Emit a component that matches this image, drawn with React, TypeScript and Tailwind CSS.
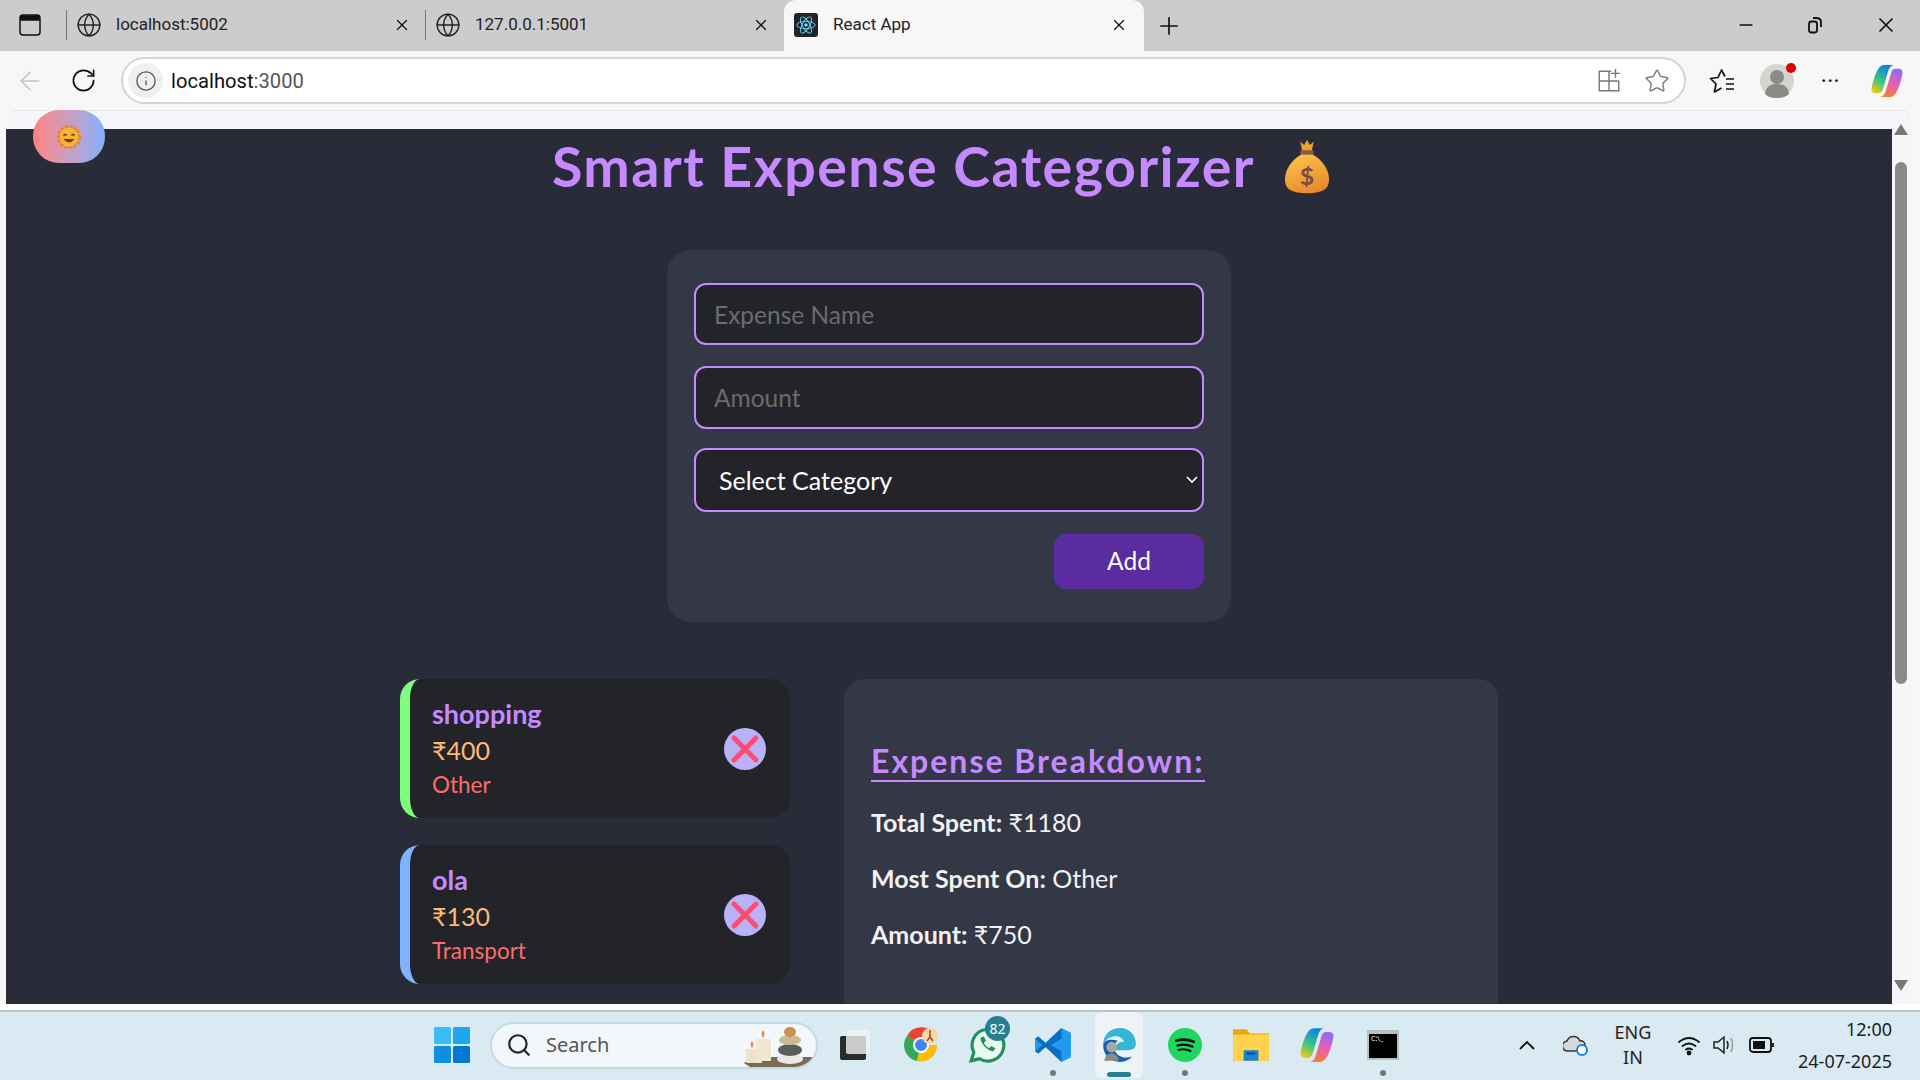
import { ArrowLeft, Globe, Info, Minus, Plus, RotateCw, Search, Star, X } from 'lucide-react';

const expenses = [
  { name: 'shopping', amount: '₹400', category: 'Other', border: 'border-[#7dff7d]' },
  { name: 'ola', amount: '₹130', category: 'Transport', border: 'border-[#7fb2ff]' },
];

const stats = [
  { label: 'Total Spent:', value: '₹1180' },
  { label: 'Most Spent On:', value: 'Other' },
  { label: 'Amount:', value: '₹750' },
];

function BackgroundTab({ title }: { title: string }) {
  return (
    <div className="flex h-[51px] w-[359px] shrink-0 items-center pb-[2px]">
      <div className="h-[30px] w-px bg-[#777]" />
      <Globe className="ml-[9px] size-[26px] text-[#222]" strokeWidth={1.3} />
      <span className="ml-[14px] text-[17px] text-[#222]">{title}</span>
      <X className="ml-auto mr-[14px] size-[18px] text-[#111]" strokeWidth={1.7} />
    </div>
  );
}

function ReactLogo() {
  return (
    <div className="flex size-[24px] items-center justify-center rounded-[3px] bg-[#20232a]">
      <svg viewBox="0 0 24 24" className="size-[22px]" fill="none" stroke="#61dafb" strokeWidth="1">
        <ellipse cx="12" cy="12" rx="10" ry="4" />
        <ellipse cx="12" cy="12" rx="10" ry="4" transform="rotate(60 12 12)" />
        <ellipse cx="12" cy="12" rx="10" ry="4" transform="rotate(120 12 12)" />
        <circle cx="12" cy="12" r="2" fill="#61dafb" stroke="none" />
      </svg>
    </div>
  );
}

function CopilotLogo({ size, id }: { size: string; id: string }) {
  return (
    <svg viewBox="0 0 32 32" className={size}>
      <defs>
        <linearGradient id={`${id}A`} x1="0.2" y1="1" x2="0.6" y2="0">
          <stop offset="0" stopColor="#f7c815" />
          <stop offset="0.45" stopColor="#38c77f" />
          <stop offset="1" stopColor="#0f7fe8" />
        </linearGradient>
        <linearGradient id={`${id}B`} x1="0.6" y1="0" x2="0.4" y2="1">
          <stop offset="0" stopColor="#8f6cf5" />
          <stop offset="0.55" stopColor="#ea5fb0" />
          <stop offset="1" stopColor="#f77f35" />
        </linearGradient>
      </defs>
      <path d="M13 1h9c-3 1-4 3-5 6l-5 17c-.6 2-2 3.500-4 3.500H5c-3 0-4-2.500-3.500-5C3 15 5 9 7 6c1.500-3 3.500-5 6-5z" fill={`url(#${id}A)`} />
      <path d="M19 31h-9c3-1 4-3 5-6l5-17c.6-2 2-3.500 4-3.500h3c3 0 4 2.500 3.500 5C29 17 27 23 25 26c-1.500 3-3.500 5-6 5z" fill={`url(#${id}B)`} />
    </svg>
  );
}

function SunEmoji() {
  return (
    <svg viewBox="0 0 24 28" className="h-[28px] w-[24px]">
      <circle cx="12" cy="14" r="10.500" fill="none" stroke="#e8861c" strokeWidth="3" strokeDasharray="3 1.500" />
      <circle cx="12" cy="14" r="9.500" fill="#f9b233" />
      <path d="M6.500 12.500q1.500-2 3 0M14.500 12.500q1.500-2 3 0" fill="none" stroke="#6b3a12" strokeWidth="1.300" />
      <path d="M7 16q5 6 10 0" fill="#7a3c12" stroke="#6b3a12" strokeWidth="1" />
    </svg>
  );
}

function MoneyBag() {
  return (
    <svg viewBox="0 0 48 64" preserveAspectRatio="none" className="h-[55px] w-[46px]">
      <defs>
        <linearGradient id="bag" x1="0.2" y1="0" x2="0.6" y2="1">
          <stop offset="0" stopColor="#fcc34a" />
          <stop offset="1" stopColor="#e88a2b" />
        </linearGradient>
      </defs>
      <path d="M17 3l4 4 3-6 3 6 4-4-2 11H19z" fill="#eca02e" />
      <rect x="17" y="13" width="14" height="5" rx="1" fill="#8a5a3c" />
      <path d="M18 18h12c10 6 17 18 17 29 0 12-8 16-23 16S1 59 1 47c0-11 7-23 17-29z" fill="url(#bag)" />
      <text x="24" y="53" textAnchor="middle" fontSize="26" fontWeight="700" fill="#7c4b46" fontFamily="Lato, sans-serif">$</text>
    </svg>
  );
}

function DeleteIcon() {
  return (
    <div className="flex size-[42px] items-center justify-center rounded-full bg-[#b9b2f8]">
      <svg viewBox="0 0 32 32" className="size-[32px]" stroke="#ff4d70" strokeWidth="5" strokeLinecap="round">
        <path d="M5 5l22 22M27 5L5 27" />
      </svg>
    </div>
  );
}

function Expense({ name, amount, category, border }: (typeof expenses)[number]) {
  return (
    <div className={`flex h-[139px] items-center justify-between rounded-[20px] border-l-[10px] bg-[#23242a] pl-[22px] pr-[24px] ${border}`}>
      <div className="pb-[1px]">
        <p className="text-[27px] font-bold leading-[36px] text-[#c58aff]">{name}</p>
        <p className="text-[25px] leading-[36px] text-[#fdba74]">{amount}</p>
        <p className="text-[22.5px] leading-[33px] text-[#ff6b6b]">{category}</p>
      </div>
      <DeleteIcon />
    </div>
  );
}

function TaskSlot({ children, dot }: { children: React.ReactNode; dot?: boolean }) {
  return (
    <div className="relative flex h-[66px] w-[66px] shrink-0 items-center justify-center">
      {children}
      {dot && <div className="absolute bottom-[2px] size-[6px] rounded-full bg-[#777]" />}
    </div>
  );
}

function BrowserChrome() {
  return (
    <>
      <div className="flex h-[51px] shrink-0 items-center bg-[#cccccc]">
        <div className="flex w-[66px] justify-center pb-[2px] pr-[6px]">
          <svg viewBox="0 0 22 24" className="h-[24px] w-[22px]" fill="none" stroke="#111" strokeWidth="1.500">
            <rect x="1" y="2" width="20" height="20" rx="3" />
            <path d="M2 3h18v4H2z" fill="#111" />
          </svg>
        </div>
        <BackgroundTab title="localhost:5002" />
        <BackgroundTab title="127.0.0.1:5001" />
        <div className="flex h-[51px] w-[360px] shrink-0 items-center rounded-t-[12px] bg-[#f7f7f7] pb-[2px] pl-[10px]">
          <ReactLogo />
          <span className="ml-[15px] text-[17px] text-[#222]">React App</span>
          <X className="ml-auto mr-[16px] size-[18px] text-[#111]" strokeWidth={1.7} />
        </div>
        <Plus className="ml-[11px] size-[28px] text-[#111]" strokeWidth={1.4} />
        <div className="ml-auto flex items-center gap-[49px] pb-[2px] pr-[22px]">
          <Minus className="ml-[1px] size-[20px] text-[#111]" strokeWidth={2} />
          <svg viewBox="0 0 20 20" className="size-[20px]" fill="none" stroke="#111" strokeWidth="1.800">
            <rect x="4" y="6.500" width="8" height="11" rx="2.500" />
            <path d="M8 3h3c3 0 5 1.500 5 4v5" />
          </svg>
          <X className="size-[24px] text-[#111]" strokeWidth={1.7} />
        </div>
      </div>
      <div className="flex h-[59px] shrink-0 items-center bg-[#f7f7f7]">
        <div className="flex w-[121px] items-center">
          <ArrowLeft className="ml-[15px] size-[30px] text-[#c4c4c4]" strokeWidth={1.300} />
          <RotateCw className="ml-[25px] size-[27px] text-[#111]" strokeWidth={1.500} />
        </div>
        <div className="flex h-[47px] w-[1565px] items-center rounded-full border-2 border-[#d4d4d4] bg-white pl-[5px] pr-[14px]">
          <div className="flex size-[35px] items-center justify-center rounded-full bg-[#f0f0f0]">
            <Info className="size-[22px] text-[#555]" strokeWidth={1.400} />
          </div>
          <span className="ml-[8px] pt-[2px] text-[20.2px] text-[#111]">
            localhost<span className="text-[#555]">:3000</span>
          </span>
          <svg viewBox="0 0 24 24" className="ml-auto size-[26px]" fill="none" stroke="#777" strokeWidth="1.300">
            <path d="M14 3H3v18h18v-9M3 12h18M12 3v18M18 1v8M14 5h8" />
          </svg>
          <Star className="ml-[22px] size-[26px] text-[#777]" strokeWidth={1.300} />
        </div>
        <div className="flex flex-1 items-center pl-[22px]">
          <svg viewBox="0 0 28 28" className="size-[28px]" fill="none" stroke="#111" strokeWidth="1.700" strokeLinejoin="round">
            <path d="M17 9.500L13.500 3 10 10.500l-7.500 1 5.500 5.500L6.500 25l7-4" />
            <path d="M18 12h8M18 17h8M18 22h8" />
          </svg>
          <div className="relative ml-[24px] flex size-[34px] items-end justify-center rounded-full bg-[#d4d4d0]">
            <svg viewBox="0 0 34 34" className="size-[34px]">
              <circle cx="17" cy="13" r="7" fill="#8a8a86" />
              <path d="M5 30c1-9 7-10 12-10s11 1 12 10c-3 3-7 4-12 4s-9-1-12-4z" fill="#8a8a86" />
            </svg>
            <div className="absolute right-[-2px] top-[-1px] size-[10px] rounded-full bg-[#e00000]" />
          </div>
          <span className="ml-[27px] text-[18px] font-bold leading-none tracking-[1px] text-[#222]">···</span>
          <div className="ml-[30px]">
            <CopilotLogo size="size-[34px]" id="copTop" />
          </div>
        </div>
      </div>
    </>
  );
}

function Taskbar() {
  return (
    <div className="flex h-[70px] shrink-0 items-center border-t-2 border-[#b9c4c8] bg-[#d9eaf2] pb-[2px] pl-[434px] pr-[28px] font-['Noto_Sans',sans-serif]">
      <svg viewBox="0 0 36 36" className="size-[36px]">
        <rect width="17" height="17" x="0" y="0" rx="1.500" fill="#38bdf8" />
        <rect width="17" height="17" x="19" y="0" rx="1.500" fill="#1ea6ee" />
        <rect width="17" height="17" x="0" y="19" rx="1.500" fill="#0f8fe0" />
        <rect width="17" height="17" x="19" y="19" rx="1.500" fill="#0078d4" />
      </svg>
      <div className="relative ml-[20px] flex h-[47px] w-[328px] shrink-0 items-center overflow-hidden rounded-full border-2 border-[#c8d8df] bg-[#f1f7fa] pl-[14px]">
        <Search className="size-[26px] text-[#222]" strokeWidth={2} />
        <span className="ml-[14px] text-[20px] text-[#555]">Search</span>
        <svg viewBox="0 0 70 40" className="absolute bottom-0 right-[2px] h-[40px] w-[70px]">
          <path d="M0 36l8-6h62l-8 10H6z" fill="#7a6a55" />
          <rect x="2" y="22" width="16" height="14" rx="1" fill="#ede2cc" />
          <rect x="12" y="12" width="15" height="22" rx="1" fill="#f0e6d2" />
          <path d="M8 14q3 4 0 7-3-3 0-7zM19 3q3 4 0 8-3-4 0-8z" fill="#f08a3c" />
          <ellipse cx="46" cy="32" rx="13" ry="5" fill="#e8e8e4" />
          <ellipse cx="46" cy="23" rx="12" ry="6" fill="#5c5c5a" />
          <ellipse cx="46" cy="13" rx="11" ry="5" fill="#cbb990" />
          <ellipse cx="46" cy="5" rx="6" ry="5" fill="#c8924e" />
        </svg>
      </div>
      <div className="ml-[4px] flex items-center">
        <TaskSlot>
          <div className="relative size-[30px]">
            <div className="absolute bottom-0 left-0 h-[24px] w-[26px] rounded-[2px] bg-[#2a2a2a]" />
            <div className="absolute right-0 top-0 h-[24px] w-[24px] rounded-[2px] bg-[#f0f3f4]/80" />
          </div>
        </TaskSlot>
        <TaskSlot>
          <svg viewBox="0 0 36 36" className="size-[36px]">
            <path d="M18 18L4 9a16 16 0 0128-1z" fill="#ea4335" />
            <path d="M18 18L4 9a16 16 0 0010 25z" fill="#34a853" />
            <path d="M18 18h16a16 16 0 01-20 16z" fill="#fbbc05" />
            <circle cx="18" cy="18" r="8" fill="#fff" />
            <circle cx="18" cy="18" r="6" fill="#4285f4" />
            <circle cx="27" cy="9" r="8" fill="#f3d8a8" />
            <path d="M27 3v7l-3 4M27 10l3 4" stroke="#b4421f" strokeWidth="1.600" fill="none" />
          </svg>
        </TaskSlot>
        <TaskSlot>
          <div className="relative">
            <svg viewBox="0 0 36 36" className="size-[38px]" fill="none" stroke="#1f8f5f" strokeWidth="3">
              <path d="M3 33l2.500-8A15 15 0 1111 31z" fill="#eaf6f0" />
              <path d="M12 11c-1 4 6 13 12 13l2-3-4-2-2 2c-2-1-4-3-5-5l2-2-2-4z" fill="#1f8f5f" stroke="none" />
            </svg>
            <span className="absolute left-[17px] top-[-10px] flex size-[25px] items-center justify-center rounded-full bg-[#277f92] text-[14px] text-white">82</span>
          </div>
        </TaskSlot>
        <TaskSlot dot>
          <svg viewBox="0 0 36 36" className="size-[38px]">
            <path d="M26 2l9 4.500v23L26 34 11 20 4 26l-3-2V12l3-2 7 6z" fill="#1f9cf0" />
            <path d="M26 2v10l-10 6 10 6v10L11 20 4 26l-3-2 7-6-7-6 3-2 7 6z" fill="#0a6fc2" />
          </svg>
        </TaskSlot>
        <TaskSlot>
          <div className="absolute inset-x-[9px] inset-y-0 rounded-[6px] bg-[#edf4f8]" />
          <svg viewBox="0 0 36 36" className="relative size-[38px]">
            <path d="M3 18C3 8 10 2 19 2c9 0 15 7 15 15 0 5-5 6-9 6H14c0-6 5-9 9-8-2-4-6-6-10-5C8 11 4 14 3 18z" fill="#35b6d6" />
            <path d="M3 18c0 10 7 16 16 16 5 0 9-2 11-5-5 2-14 1-16-6-1-4 0-7 3-9C10 12 4 13 3 18z" fill="#1560b0" />
            <circle cx="11" cy="20" r="5" fill="#a8a8a4" />
            <path d="M4 33c1-5 4-7 7-7s6 2 7 7z" fill="#8a8a86" />
          </svg>
          <div className="absolute bottom-[1px] h-[5px] w-[24px] rounded-full bg-[#277f92]" />
        </TaskSlot>
        <TaskSlot dot>
          <div className="flex size-[34px] items-center justify-center rounded-full bg-[#1ed760]">
            <svg viewBox="0 0 24 24" className="size-[26px]" fill="none" stroke="#111" strokeLinecap="round">
              <path d="M4 8q8-2.500 16 1" strokeWidth="2.600" />
              <path d="M5 12.500q7-2 14 1" strokeWidth="2.200" />
              <path d="M6 16.500q6-1.500 11 1" strokeWidth="1.900" />
            </svg>
          </div>
        </TaskSlot>
        <TaskSlot>
          <svg viewBox="0 0 36 36" className="size-[38px]">
            <path d="M1 3h13l3 4h18v26H1z" fill="#e8a80c" />
            <path d="M1 8h34v25H1z" fill="#ffd34d" />
            <rect x="11" y="23" width="14" height="10" rx="1" fill="#1a83d4" />
            <rect x="14" y="25" width="8" height="2" fill="#0b4f8a" />
          </svg>
        </TaskSlot>
        <TaskSlot>
          <CopilotLogo size="size-[36px]" id="copBar" />
        </TaskSlot>
        <TaskSlot dot>
          <div className="h-[30px] w-[32px] border-2 border-t-[4px] border-[#b8c0c4] bg-black pl-[2px] text-[7px] leading-[9px] text-white">C:\_</div>
        </TaskSlot>
      </div>
      <div className="ml-auto flex items-center text-[#222]">
        <svg viewBox="0 0 20 20" className="size-[20px]" fill="none" stroke="#111" strokeWidth="1.800">
          <path d="M3 14l7-7 7 7" />
        </svg>
        <svg viewBox="0 0 26 24" className="ml-[26px] h-[24px] w-[26px]">
          <path d="M5 18a5 5 0 01-1-10 7 7 0 0113 0 4 4 0 015 4v6z" fill="#d5d8da" stroke="#333" strokeWidth="1.500" />
          <circle cx="19" cy="17" r="5" fill="#fff" stroke="#1a83d4" strokeWidth="2" />
        </svg>
        <div className="ml-[24px] w-[40px] text-center text-[18px] leading-[25px]">
          <p>ENG</p>
          <p>IN</p>
        </div>
        <svg viewBox="0 0 24 24" className="ml-[24px] size-[24px]" fill="none" stroke="#111" strokeWidth="1.800" strokeLinecap="round">
          <path d="M2 9q10-8 20 0M5.500 13q6.500-5 13 0M9 16.500q3-2 6 0" />
          <circle cx="12" cy="20" r="1.500" fill="#111" />
        </svg>
        <svg viewBox="0 0 26 26" className="ml-[10px] size-[26px]" fill="none" stroke="#222" strokeWidth="1.500">
          <path d="M3 10h4l6-5v16l-6-5H3z" />
          <path d="M16 9q2 4 0 8" />
          <path d="M20 6q3 7 0 14" stroke="#999" />
        </svg>
        <svg viewBox="0 0 26 20" className="ml-[12px] h-[20px] w-[26px]" fill="none" stroke="#111" strokeWidth="1.800">
          <rect x="1" y="3" width="21" height="14" rx="3" />
          <rect x="4" y="6" width="12" height="8" fill="#111" stroke="none" />
          <path d="M24 8v4" />
        </svg>
        <div className="ml-[14px] w-[103px] text-right text-[18px] leading-[32px]">
          <p>12:00</p>
          <p>24-07-2025</p>
        </div>
      </div>
    </div>
  );
}

export default function App() {
  return (
    <div className="flex h-screen flex-col overflow-hidden bg-[#f7f7f7] font-['Roboto',sans-serif]">
      <BrowserChrome />

      {/* Page viewport */}
      <div className="flex min-h-0 flex-1 px-[6px] pr-[10px]">
        <div className="relative flex min-w-0 flex-1 flex-col overflow-hidden rounded-tl-[8px] font-['Lato',sans-serif]">
          <div className="h-[19px] shrink-0 border-t border-[#e6e6e6] bg-[#f5f5fa]" />
          <button className="absolute left-[27px] top-0 flex h-[53px] w-[72px] items-center justify-center rounded-[26px] bg-gradient-to-r from-[#ff8080] to-[#80b0ff]">
            <SunEmoji />
          </button>
          <div className="flex-1 overflow-hidden bg-[#2a2b38]">
            <div className="flex items-center justify-center gap-[29px] pr-[16px] pt-[6px]">
              <h1 className="text-[55.5px] font-bold leading-[62px] tracking-[1.5px] text-[#c58aff]">Smart Expense Categorizer</h1>
              <MoneyBag />
            </div>

            <form className="mx-auto mt-[53px] flex w-[564px] flex-col rounded-[24px] bg-[#343746] px-[27px] pb-[33px] pt-[33px]">
              <input
                placeholder="Expense Name"
                className="h-[62px] rounded-[12px] border-2 border-[#c58aff] bg-[#23242a] px-[18px] text-[24.5px] text-white outline-none placeholder:text-[#6b6b6b]"
              />
              <input
                placeholder="Amount"
                className="mt-[21px] h-[63px] rounded-[12px] border-2 border-[#c58aff] bg-[#23242a] px-[18px] pb-[1px] text-[24.5px] text-white outline-none placeholder:text-[#6b6b6b]"
              />
              <div className="relative mt-[19px] flex h-[64px] items-center rounded-[12px] border-2 border-[#c58aff] bg-[#23242a] pl-[23px] pt-[1px] text-[25px] text-white">
                Select Category
                <svg viewBox="0 0 12 8" className="absolute right-[4px] top-[26px] h-[8px] w-[12px]" fill="none" stroke="#fff" strokeWidth="1.600">
                  <path d="M1 1l5 5 5-5" />
                </svg>
              </div>
              <button type="button" className="mt-[22px] h-[55px] w-[150px] self-end rounded-[12px] bg-[#5b2ba0] text-[24.5px] text-white">
                Add
              </button>
            </form>

            <div className="mt-[57px] flex justify-center gap-[54px]">
              <div className="flex w-[390px] shrink-0 flex-col gap-[27px]">
                {expenses.map((item) => (
                  <Expense key={item.name} {...item} />
                ))}
              </div>
              <div className="h-[420px] w-[654px] shrink-0 rounded-[20px] bg-[#343746] px-[27px] pt-[63px]">
                <h2 className="inline-block border-b-2 border-[#c58aff] text-[32px] font-bold leading-[38px] tracking-[2px] text-[#c58aff]">Expense Breakdown:</h2>
                <div className="mt-[25px] flex flex-col gap-[26px] text-[25px] leading-[30px] text-[#f2f2f2]">
                  {stats.map((row) => (
                    <p key={row.label}>
                      <strong>{row.label}</strong> {row.value}
                    </p>
                  ))}
                </div>
              </div>
            </div>
          </div>
        </div>

        {/* Scrollbar */}
        <div className="flex w-[18px] shrink-0 flex-col items-center rounded-tr-[8px] border-t border-[#e6e6e6] bg-[#f5f5fa] pt-[13px]">
          <div className="size-0 border-x-[7px] border-b-[11px] border-x-transparent border-b-[#777]" />
          <div className="mt-[27px] h-[522px] w-[12px] rounded-full bg-[#8a8a8a]" />
          <div className="mb-[13px] mt-auto size-0 border-x-[7px] border-t-[11px] border-x-transparent border-t-[#777]" />
        </div>
      </div>

      <div className="h-[6px] shrink-0 bg-white" />
      <Taskbar />
    </div>
  );
}
